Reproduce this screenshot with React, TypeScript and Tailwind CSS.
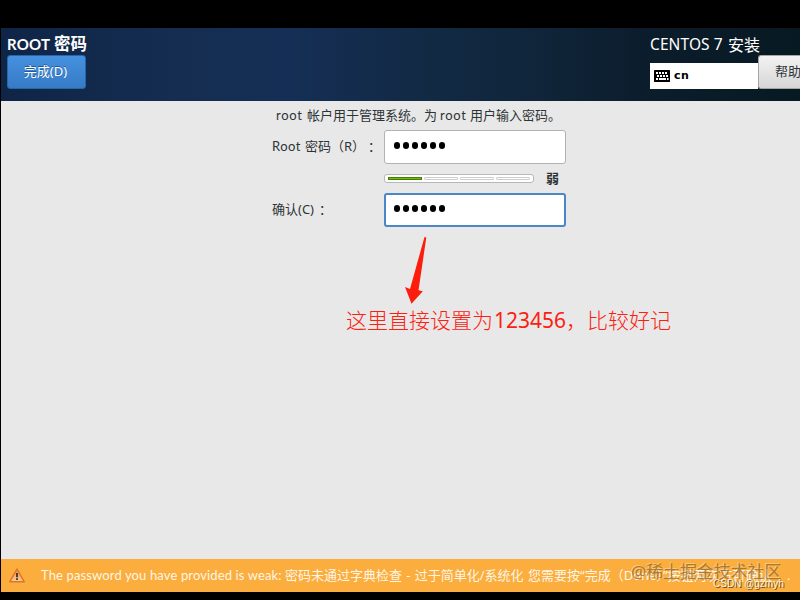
const PASSWORD_LENGTH = 6;
const STRENGTH_LEVELS = 4;

type PasswordFieldProps = {
  focused?: boolean;
};

const PasswordField = ({ focused = false }: PasswordFieldProps) => {
  return (
    <div
      className={
        focused
          ? "flex h-[34px] w-[182px] items-center gap-[3px] rounded-[3px] border-2 border-[#4a86c8] bg-white pb-[3px] pl-[8px]"
          : "flex h-[34px] w-[182px] items-center gap-[3px] rounded-[3px] border border-[#b2b2b2] bg-white pb-[3px] pl-[9px]"
      }
    >
      {Array.from({ length: PASSWORD_LENGTH }, (_, i) => (
        <span key={i} className="h-[7px] w-[6px] rounded-full bg-black" />
      ))}
    </div>
  );
};

const StrengthMeter = ({ level }: { level: number }) => {
  return (
    <div className="flex h-[9px] w-[150px] items-center gap-[2px] rounded-[3px] border border-[#b8b8b8] bg-white px-[3px]">
      {Array.from({ length: STRENGTH_LEVELS }, (_, i) => (
        <span
          key={i}
          className={
            i < level
              ? "h-[3px] flex-1 border border-[#438000] bg-[#73b816]"
              : "h-[3px] flex-1 rounded-[1px] border border-[#cecece] bg-white"
          }
        />
      ))}
    </div>
  );
};

const KeyboardIcon = () => (
  <svg width="16" height="12" viewBox="0 0 16 12">
    <rect width="16" height="12" rx="0.5" fill="#000" />
    <path
      d="M2 3h2M5 3h2M8 3h2M11 3h2M3 6h2M6 6h2M9 6h2M12 6h2M2 9h2M5 9h7M13 9h1.6"
      stroke="#fff"
      strokeWidth="2"
    />
  </svg>
);

const WarningIcon = () => (
  <svg width="16" height="16" viewBox="0 0 16 16">
    <defs>
      <linearGradient id="warning" x1="0" y1="0" x2="0" y2="1">
        <stop offset="0" stopColor="#f08a3c" />
        <stop offset="1" stopColor="#f8cf9f" />
      </linearGradient>
    </defs>
    <path d="M8 1 15.2 13.8H0.8Z" fill="url(#warning)" stroke="#e27425" strokeWidth="1.5" strokeLinejoin="round" />
    <path d="M8 5v4.3M8 10.3v1.8" stroke="#2d2a26" strokeWidth="1.7" />
  </svg>
);

const Header = () => {
  return (
    <header className="flex h-[73px] shrink-0 justify-between bg-[linear-gradient(90deg,#0f2547_0%,#142d50_22%,#152e55_36%,#122a45_52%,#10253a_67%,#0b1c2b_82%,#071a22_100%)] text-white">
      <div className="pl-[6px] pt-[6px]">
        <h1 className="flex h-[21px] items-center whitespace-nowrap text-[16px] font-bold">
          <span className="w-[47px] font-['Lato'] text-[15px] tracking-[0.2px]">ROOT</span>
          <span className="text-[16.5px]">密码</span>
        </h1>
        <button className="flex h-[34px] w-[79px] items-center justify-center rounded-[3px] border border-[#2866a9] bg-linear-to-b from-[#4591df] to-[#367bc6] pb-px pr-[2px] text-[13px] [text-shadow:0_-1px_0_#235a95]">
          完成(D)
        </button>
      </div>

      <div className="w-[150px] pt-[6px]">
        <h2 className="flex h-[21px] items-center whitespace-nowrap text-[16px]">
          <span className="w-[78px] text-[15.5px] tracking-[0.1px]">CENTOS 7</span>
          <span>安装</span>
        </h2>
        <div className="flex items-start">
          <div className="mt-2 flex h-[26px] w-[108px] items-center gap-[4px] bg-white pl-[4px] text-black">
            <KeyboardIcon />
            <span className="font-['DejaVu_Sans'] text-[11px] font-bold tracking-[0.6px]">cn</span>
          </div>
          <button className="h-[34px] w-[42px] overflow-hidden whitespace-nowrap rounded-l-[3px] border border-r-0 border-[#a6a6a6] bg-linear-to-b from-[#f3f3f3] to-[#d6d6d6] pb-px pl-[16px] text-left text-[13px] text-[#2e3436]">
            帮助
          </button>
        </div>
      </div>
    </header>
  );
};

const PasswordForm = () => {
  return (
    <section className="pl-[271px] text-[13px] text-[#2e3436]">
      <p className="flex h-[29px] items-center whitespace-nowrap pl-1">
        <span className="w-[31px] font-['Lato'] tracking-[0.7px]">root</span>
        <span className="w-[133px]">帐户用于管理系统。为</span>
        <span className="w-[30px] font-['Lato'] tracking-[0.7px]">root</span>
        <span>用户输入密码。</span>
      </p>

      <div className="flex items-center">
        <label className="flex w-[112px] items-center whitespace-nowrap">
          <span className="w-[33px] font-['Lato'] tracking-[0.5px]">Root</span>
          <span className="w-[63px]">密码（R）</span>
          <span>：</span>
        </label>
        <PasswordField />
      </div>

      <div className="flex h-[29px] items-center pl-[112px]">
        <StrengthMeter level={1} />
        <span className="ml-[12px] text-[13px] font-bold">弱</span>
      </div>

      <div className="flex items-center">
        <label className="flex w-[112px] whitespace-nowrap">
          <span className="w-[47px]">确认(C)</span>
          <span>：</span>
        </label>
        <PasswordField focused />
      </div>
    </section>
  );
};

const Annotation = () => {
  return (
    <div className="pl-[345px] pt-[9px] text-[#fc2010]">
      <svg className="ml-[55px]" width="30" height="70" viewBox="0 0 30 70">
        <path d="M23.5 1 25.3 1.5 17.5 54.2 21.8 55.2 10.5 67.8 4 51 9 53Z" fill="#fc1d0c" />
      </svg>
      <p className="flex h-[30px] items-center whitespace-nowrap text-[21px] font-light">
        <span className="w-[148px]">这里直接设置为</span>
        <span className="w-[72px] font-['Noto_Sans'] text-[21px] font-normal">123456</span>
        <span>，比较好记</span>
      </p>
    </div>
  );
};

const WarningBar = () => {
  return (
    <footer className="relative flex h-[33px] shrink-0 items-center overflow-hidden whitespace-nowrap bg-[#fbad3d] pl-[8px] text-[13px] text-[#fff6e6]">
      <WarningIcon />
      <span className="ml-[16px] w-[244px] font-['Lato'] tracking-[0.13px]">
        The password you have provided is weak:
      </span>
      <span className="w-[243px] [word-spacing:0.9px]">密码未通过字典检查 - 过于简单化/系统化</span>
      <span className="w-[259px]">您需要按“完成（Done）”按钮两次方可确认</span>
      <span>.</span>
      <span className="absolute left-[630px] top-0 text-[16.9px] text-[#8f6529]/75 [text-shadow:-1px_-1px_0_#ffffff55]">
        @稀土掘金技术社区
      </span>
      <span className="absolute left-[712px] top-[17px] font-['Liberation_Sans'] text-[10px] leading-4 text-[#fff2da] [text-shadow:1px_1px_0_#6b4b20]">
        CSDN @gzmyh
      </span>
    </footer>
  );
};

const App = () => {
  return (
    <div className="flex h-[600px] w-[800px] flex-col overflow-hidden bg-black pb-[8px] pl-px pt-[28px] font-['Noto_Sans','Noto_Sans_CJK_SC',sans-serif]">
      <Header />
      <main className="min-h-0 flex-1 bg-[#e8e8e8]">
        <PasswordForm />
        <Annotation />
      </main>
      <WarningBar />
    </div>
  );
};

export default App;
